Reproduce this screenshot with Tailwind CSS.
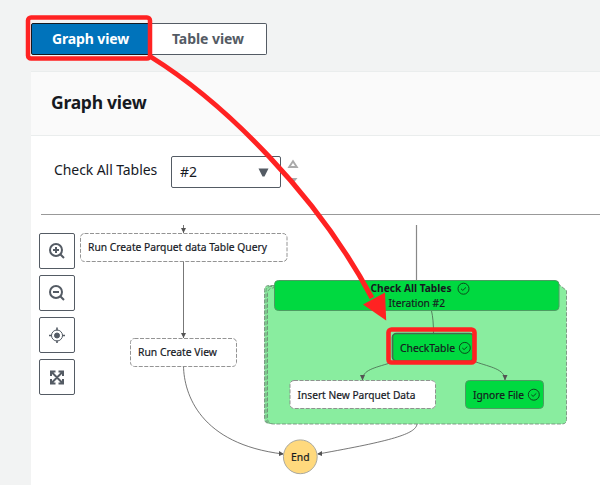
<!DOCTYPE html>
<html lang="en">
<head>
<meta charset="utf-8">
<title>Graph view</title>
<script src="https://cdn.jsdelivr.net/npm/@tailwindcss/browser@4"></script>
</head>
<body class="relative h-[485px] w-[600px] overflow-hidden bg-[#f2f3f3] pl-[31px] pt-[23px] font-['Noto_Sans',sans-serif] text-[#16191f]">
  <div class="flex h-8 w-[236px] text-[14px] font-bold leading-none">
    <button class="flex w-[119px] items-center justify-center rounded-l-[2px] border border-[#16191f] bg-[#0073bb] text-white tracking-[-0.12px]">Graph view</button>
    <button class="flex flex-1 items-center justify-center rounded-r-[2px] border border-l-0 border-[#545b64] bg-white text-[#545b64] tracking-[-0.05px]">Table view</button>
  </div>
  <main class="mt-4 h-[414px] w-[569px] bg-white">
    <header class="flex h-[65px] items-center border-y border-[#eaeded] bg-[#fafafa] pb-[2px] pl-[20px]">
      <h1 class="text-[17.5px] font-bold leading-none tracking-[-0.25px]">Graph view</h1>
    </header>
    <div class="ml-[10px] flex h-[79px] border-b border-[#999] pl-[13px] pt-5">
      <label class="w-[117px] pt-1 text-[14px] leading-5 tracking-[-0.08px]">Check All Tables</label>
      <div class="flex h-8 w-[110px] items-center justify-between rounded-[2px] border border-[#545b64] bg-white pl-2 pr-[11px] text-[14px]">
        <span class="pb-px">#2</span>
        <svg class="h-[9px] w-[11px]" viewBox="0 0 11 9"><path d="M.5.5h10L6.500 8.500h-2z" fill="#545b64"/></svg>
      </div>
      <svg class="ml-[6px] mt-[3px] h-[26px] w-3" viewBox="0 0 12 26"><path d="M2.200 8h7.600L6 2.200z" fill="none" stroke="#aaaaaa" stroke-width="1.900"/><path d="M2 19h8.500l-4 5z" fill="#aaaaaa"/></svg>
    </div>
    <div class="relative h-[270px]">
      <svg class="block h-[270px] w-[569px] font-['Noto_Sans',sans-serif]" viewBox="31 215 569 270">
        <g fill="none" stroke="#545454" stroke-width=".8">
          <path d="M183.500 225v8M183.500 261v77M183.500 366C184 394 200 444 283 454M417 424C416 434 391 441 318 454"/>
          <path d="M416.500 225v56" stroke="#888" stroke-width="1.200"/>
        </g>
        <g fill="#545454">
          <path d="M181 228h5l-2.500 5zM181 333h5l-2.500 5zM284 454l-5-3v5zM317 454l5-3v5z"/>
        </g>
        <g fill="#89ed9f" stroke="#6c8572" stroke-width=".8" stroke-dasharray="4 1.500">
          <path d="M555 285.500H269q-4.500 0-4.500 5v128q0 5 5 5h291"/>
          <path d="M558 286.500H271q-5 0-5 5v127q0 5 5 5h290"/>
          <path d="M273.500 287.500H558l1-3 7.500 6v129q0 4.500-4.500 4.500H273.500q-6 0-6-6v-124q0-6 6-6z"/>
        </g>
        <rect x="274.500" y="280.500" width="284.500" height="30" rx="4" fill="#00d940" stroke="#4d9c62"/>
        <g fill="none" stroke="#46634c" stroke-width=".8">
          <path d="M431.500 311Q433.500 319 433.500 334M390 363C374 368 362.500 370 362.500 380M476 362C490 367 505 369 505 380"/>
        </g>
        <path d="M360 375h5l-2.500 5.500zM502.500 375h5l-2.500 5.500z" fill="#545454"/>
        <g fill="#fff" stroke="#888" stroke-width=".9" stroke-dasharray="4 1.500">
          <rect x="80.500" y="233.500" width="206.500" height="28" rx="4"/>
          <rect x="130.500" y="338.500" width="106" height="28" rx="4"/>
          <rect x="290" y="380.500" width="145.500" height="28" rx="4"/>
        </g>
        <rect x="392.500" y="333.500" width="81" height="27.500" rx="4" fill="#00d940" stroke="#456d4f" stroke-width="1.700"/>
        <rect x="465.500" y="380.500" width="78" height="28" rx="4" fill="#00d940" stroke="#4d9c62"/>
        <circle cx="300.300" cy="456.800" r="16.900" fill="#ffd97d" stroke="#aaa99f"/>
        <g fill="#16191f" stroke="#16191f" stroke-width=".2" font-size="11">
          <text x="88" y="251" textLength="179" lengthAdjust="spacingAndGlyphs">Run Create Parquet data Table Query</text>
          <text x="138" y="356" textLength="79" lengthAdjust="spacingAndGlyphs">Run Create View</text>
          <text x="297.500" y="399" textLength="118" lengthAdjust="spacingAndGlyphs">Insert New Parquet Data</text>
          <text x="400" y="352" textLength="55" lengthAdjust="spacingAndGlyphs">CheckTable</text>
          <text x="473" y="399" textLength="51" lengthAdjust="spacingAndGlyphs">Ignore File</text>
          <text x="291" y="461" textLength="18.500" lengthAdjust="spacingAndGlyphs">End</text>
          <text x="388.500" y="307" textLength="56.500" lengthAdjust="spacingAndGlyphs">Iteration #2</text>
          <text x="370.500" y="292" font-weight="700" stroke="none" textLength="81" lengthAdjust="spacingAndGlyphs">Check All Tables</text>
        </g>
        <g fill="none" stroke="#0b4a1b" stroke-width="1">
          <g id="success"><circle cx="463.500" cy="288.700" r="5.500"/><path d="M461 288.800l1.800 1.600 3.200-3"/></g>
          <use href="#success" x="1.300" y="59.200"/>
          <use href="#success" x="70.300" y="106"/>
        </g>
      </svg>
      <div class="absolute left-[8px] top-[18px] flex flex-col gap-[6px]">
        <button class="flex size-9 items-center justify-center rounded-[2px] border border-[#545b64] bg-white"><svg class="size-4" viewBox="0 0 16 16" fill="none" stroke="#545b64" stroke-width="2"><circle cx="7" cy="7" r="6"/><path d="M11.300 11.300L15 15M4 7h6M7 4v6"/></svg></button>
        <button class="flex size-9 items-center justify-center rounded-[2px] border border-[#545b64] bg-white"><svg class="size-4" viewBox="0 0 16 16" fill="none" stroke="#545b64" stroke-width="2"><circle cx="7" cy="7" r="6"/><path d="M11.300 11.300L15 15M4 7h6"/></svg></button>
        <button class="flex size-9 items-center justify-center rounded-[2px] border border-[#545b64] bg-white"><svg class="size-4" viewBox="0 0 16 16" fill="none" stroke="#545b64"><circle cx="8" cy="8.500" r="5.500"/><circle cx="8" cy="8.500" r="2.500" fill="#545b64"/><path d="M8 .5v3M8 13.500v3M0 8.500h3M13 8.500h3" stroke-width="1.600"/></svg></button>
        <button class="flex size-9 items-center justify-center rounded-[2px] border border-[#545b64] bg-white"><svg class="size-4" viewBox="0 0 16 16" fill="none" stroke="#545b64" stroke-width="2"><path d="M2.500 3l11 11M13.500 3l-11 11M2 7V2.500h4.500M9.500 2.500H14V7M2 10v4.500h4.500M9.500 14.500H14V10"/></svg></button>
      </div>
    </div>
  </main>
  <svg class="pointer-events-none absolute left-0 top-0 h-[485px] w-[600px]" viewBox="0 0 600 485" fill="none" stroke="#ff2222">
    <rect x="28" y="17.500" width="122" height="41" rx="3" stroke-width="4.500"/>
    <rect x="388.500" y="329.500" width="86" height="33" rx="3" stroke-width="4.600"/>
    <path d="M151 57C225 103 318 196 372 298" stroke-width="5"/>
    <path d="M363 304.500l22-12 1.200 28z" fill="#ff2222" stroke="none"/>
  </svg>
</body>
</html>
